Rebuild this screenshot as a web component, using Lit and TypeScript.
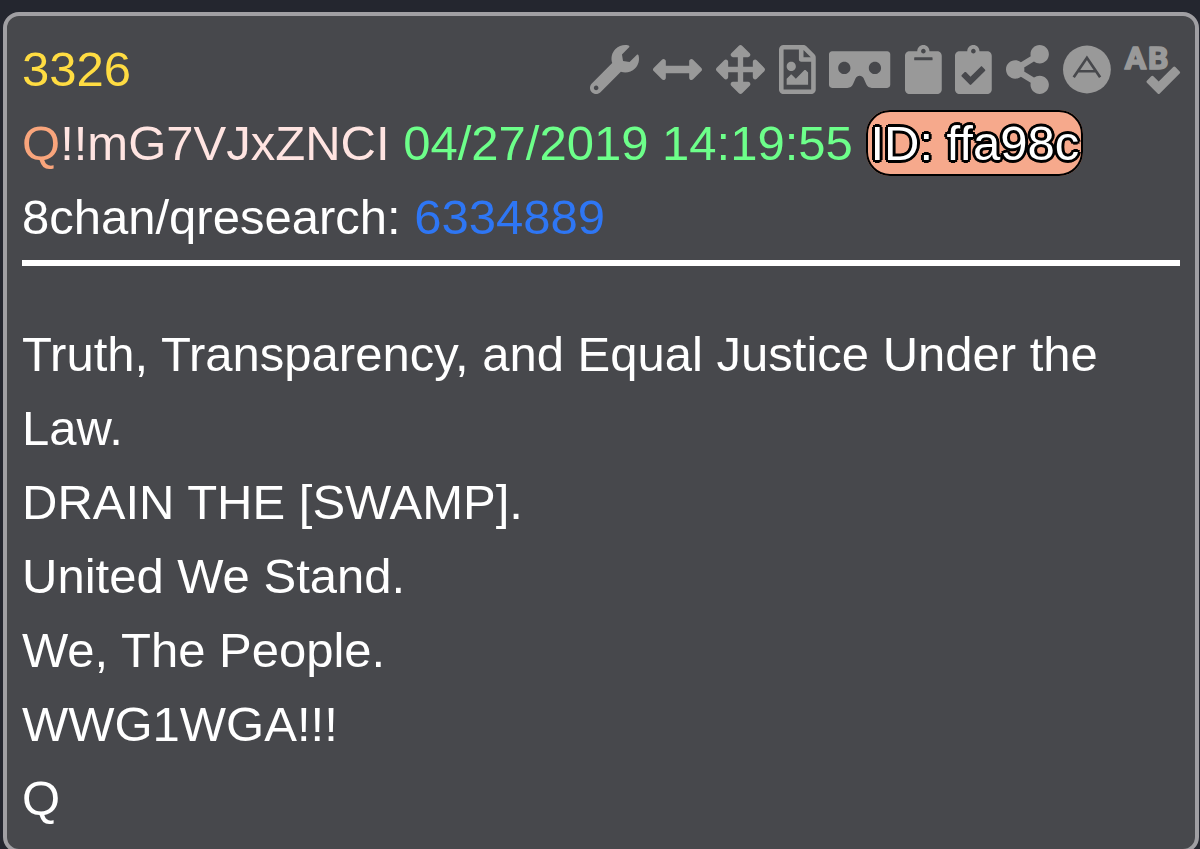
import { LitElement, html, svg, css } from "lit";
import { customElement, property } from "lit/decorators.js";

interface Tool {
  label: string;
  width: number;
  shape: unknown;
}

const TOOLS: Tool[] = [
  {
    label: "Tools",
    width: 512,
    shape: svg`<path d="M507.73 109.1c-2.24-9.03-13.54-12.09-20.12-5.51l-74.36 74.36-67.88-11.31-11.31-67.88 74.36-74.36c6.62-6.62 3.43-17.9-5.66-20.16-47.38-11.74-99.55.91-136.58 37.93-39.64 39.64-50.55 97.1-34.05 147.2L18.74 402.76c-24.99 24.99-24.99 65.51 0 90.5 24.99 24.99 65.51 24.99 90.5 0l213.21-213.21c50.12 16.71 107.47 5.68 147.37-34.22 37.07-37.07 49.7-89.32 37.91-136.73zM64 472c-13.25 0-24-10.75-24-24 0-13.26 10.75-24 24-24s24 10.74 24 24c0 13.25-10.75 24-24 24z"/>`,
  },
  {
    label: "Widen",
    width: 512,
    shape: svg`<path d="M377.941 169.941V216H134.059v-46.059c0-21.382-25.851-32.09-40.971-16.971L7.029 239.029c-9.373 9.373-9.373 24.568 0 33.941l86.059 86.059c15.119 15.119 40.971 4.411 40.971-16.971V296h243.882v46.059c0 21.382 25.851 32.09 40.971 16.971l86.059-86.059c9.373-9.373 9.373-24.568 0-33.941l-86.059-86.059c-15.119-15.12-40.971-4.412-40.971 16.97z"/>`,
  },
  {
    label: "Expand",
    width: 512,
    shape: svg`<path d="M352.201 425.775l-79.196 79.196c-9.373 9.373-24.568 9.373-33.941 0l-79.196-79.196c-15.119-15.119-4.411-40.971 16.971-40.97h51.162L228 284H127.196v51.162c0 21.382-25.851 32.09-40.971 16.971L7.029 272.937c-9.373-9.373-9.373-24.569 0-33.941L86.225 159.8c15.119-15.119 40.971-4.411 40.971 16.971V228H228V127.196h-51.23c-21.382 0-32.09-25.851-16.971-40.971l79.196-79.196c9.373-9.373 24.568-9.373 33.941 0l79.196 79.196c15.119 15.119 4.411 40.971-16.971 40.971h-51.162V228h100.804v-51.162c0-21.382 25.851-32.09 40.97-16.971l79.196 79.196c9.373 9.373 9.373 24.569 0 33.941L425.773 352.2c-15.119 15.119-40.971 4.411-40.97-16.971V284H284v100.804h51.23c21.382 0 32.09 25.851 16.971 40.971z"/>`,
  },
  {
    label: "Save as image",
    width: 384,
    shape: svg`<path d="M369.9 97.9L286 14C277 5 264.8-.1 252.1-.1H48C21.5 0 0 21.5 0 48v416c0 26.5 21.5 48 48 48h288c26.5 0 48-21.5 48-48V131.9c0-12.7-5.1-25-14.1-34zM332.1 128H256V51.9l76.1 76.1zM48 464V48h160v104c0 13.3 10.7 24 24 24h104v288H48zm32-48h224V288l-23.5-23.5c-4.7-4.7-12.3-4.7-17 0L176 352l-39.5-39.5c-4.7-4.7-12.3-4.7-17 0L80 352v64zm48-240c-26.5 0-48 21.5-48 48s21.5 48 48 48 48-21.5 48-48-21.5-48-48-48z"/>`,
  },
  {
    label: "Viewer",
    width: 640,
    shape: svg`<path d="M608 64H32C14.33 64 0 78.33 0 96v320c0 17.67 14.33 32 32 32h160.22c25.19 0 48.03-14.77 58.36-37.74l27.74-61.64C286.21 331.08 302.35 320 320 320s33.79 11.08 41.68 28.62l27.74 61.64C399.75 433.23 422.6 448 447.78 448H608c17.67 0 32-14.33 32-32V96c0-17.67-14.33-32-32-32zM160 304c-35.35 0-64-28.65-64-64s28.65-64 64-64 64 28.65 64 64-28.65 64-64 64zm320 0c-35.35 0-64-28.65-64-64s28.65-64 64-64 64 28.65 64 64-28.65 64-64 64z"/>`,
  },
  {
    label: "Copy",
    width: 384,
    shape: svg`<path d="M384 112v352c0 26.51-21.49 48-48 48H48c-26.51 0-48-21.49-48-48V112c0-26.51 21.49-48 48-48h80c0-35.29 28.71-64 64-64s64 28.71 64 64h80c26.51 0 48 21.49 48 48zM192 40c-13.255 0-24 10.745-24 24s10.745 24 24 24 24-10.745 24-24-10.745-24-24-24m96 114v-20a6 6 0 0 0-6-6H102a6 6 0 0 0-6 6v20a6 6 0 0 0 6 6h180a6 6 0 0 0 6-6z"/>`,
  },
  {
    label: "Copy checked",
    width: 384,
    shape: svg`<path d="M336 64h-80c0-35.3-28.7-64-64-64s-64 28.7-64 64H48C21.5 64 0 85.5 0 112v352c0 26.5 21.5 48 48 48h288c26.5 0 48-21.5 48-48V112c0-26.5-21.5-48-48-48zM192 40c13.3 0 24 10.7 24 24s-10.7 24-24 24-24-10.7-24-24 10.7-24 24-24zm121.2 231.8l-143 141.8c-4.7 4.7-12.3 4.6-17-.1l-82.6-83.3c-4.7-4.7-4.6-12.3.1-17L99.1 285c4.7-4.7 12.3-4.6 17 .1l46 46.4 106-105.2c4.7-4.7 12.3-4.6 17 .1l28.2 28.4c4.7 4.8 4.6 12.3-.1 17z"/>`,
  },
  {
    label: "Share",
    width: 448,
    shape: svg`<path d="M352 320c-22.608 0-43.387 7.819-59.79 20.895l-102.486-64.054a96.551 96.551 0 0 0 0-41.683l102.486-64.054C308.613 184.181 329.392 192 352 192c53.019 0 96-42.981 96-96S405.019 0 352 0s-96 42.981-96 96c0 7.158.79 14.13 2.276 20.841L155.79 180.895C139.387 167.819 118.608 160 96 160c-53.019 0-96 42.981-96 96s42.981 96 96 96c22.608 0 43.387-7.819 59.79-20.895l102.486 64.054A96.301 96.301 0 0 0 256 416c0 53.019 42.981 96 96 96s96-42.981 96-96-42.981-96-96-96z"/>`,
  },
  {
    label: "Archive",
    width: 500,
    shape: svg`<circle cx="250" cy="256" r="250"/><path class="cut" d="M112 338L250 134L388 338M164 274H336"/>`,
  },
  {
    label: "Check spelling",
    width: 576,
    shape: svg`<text class="letters" x="-4" y="247">A</text><text class="letters" x="240" y="247">B</text><path d="M571.37 276.48l-45.21-45.3a15.88 15.88 0 0 0-22.59 0l-151.5 151.5-55.41-55.5a15.88 15.88 0 0 0-22.59 0l-45.3 45.3a16 16 0 0 0 0 22.59l112 112.21a15.89 15.89 0 0 0 22.6 0l208-208.21a16 16 0 0 0-.02-22.59z"/>`,
  },
];

@customElement("tool-bar")
class ToolBar extends LitElement {
  static styles = css`
    :host {
      display: flex;
      align-items: center;
      gap: 14px;
    }
    .tool {
      display: block;
      margin: 0;
      padding: 0;
      border: 0;
      background: none;
      color: #999999;
      cursor: pointer;
    }
    .icon {
      display: block;
      height: 49px;
      width: auto;
      fill: currentColor;
      overflow: visible;
    }
    .cut {
      fill: none;
      stroke: #47484c;
      stroke-width: 28;
    }
    .letters {
      font: bold 334px Roboto, "Liberation Sans", sans-serif;
      stroke: currentColor;
      stroke-width: 18;
      stroke-linejoin: round;
    }
  `;

  render() {
    return TOOLS.map(
      (t) => html`<button class="tool" type="button" aria-label=${t.label}>
        <svg class="icon" viewBox="0 0 ${t.width} 512" aria-hidden="true">${t.shape}</svg>
      </button>`
    );
  }
}

@customElement("app-root")
class AppRoot extends LitElement {
  @property({ attribute: false }) lines = [
    "Truth, Transparency, and Equal Justice Under the Law.",
    "DRAIN THE [SWAMP].",
    "United We Stand.",
    "We, The People.",
    "WWG1WGA!!!",
    "Q",
  ];

  static styles = css`
    :host {
      display: block;
      box-sizing: border-box;
      height: 100vh;
      overflow: hidden;
      padding: 12px 1px 0 3px;
      background: #24262f;
      color: #ffffff;
      font: 49px/74px "Liberation Sans", Arial, sans-serif;
    }
    .post {
      padding: 16px 15px 14px;
      border: 4px solid #a09fa3;
      border-radius: 16px;
      background: #47484c;
    }
    .head {
      padding-bottom: 6px;
      border-bottom: 6px solid #ffffff;
    }
    .top {
      display: flex;
      align-items: center;
      justify-content: space-between;
    }
    .number {
      color: #ffdc42;
      text-decoration: none;
    }
    .name {
      color: #f9a57c;
    }
    .trip {
      color: #ffe4e1;
    }
    .time {
      color: #6dff8a;
    }
    .id {
      padding: 4px 2px;
      border: 2px solid #000000;
      border-radius: 24px;
      background: #f6a98c;
      text-shadow: 2px 0 #000, -2px 0 #000, 0 2px #000, 0 -2px #000,
        2px 2px #000, -2px 2px #000, 2px -2px #000, -2px -2px #000,
        3px 0 #000, -3px 0 #000, 0 3px #000, 0 -3px #000;
    }
    .ref {
      color: #2e76f4;
      text-decoration: none;
    }
    .body {
      padding-top: 51px;
    }
    .line {
      margin: 0;
    }
  `;

  render() {
    return html`<article class="post">
      <header class="head">
        <div class="top">
          <a class="number" href="#3326">3326</a>
          <tool-bar></tool-bar>
        </div>
        <div>
          <span class="name">Q</span><span class="trip">!!mG7VJxZNCI</span>
          <time class="time" datetime="2019-04-27T14:19:55">04/27/2019 14:19:55</time>
          <span class="id">ID: ffa98c</span>
        </div>
        <div>8chan/qresearch: <a class="ref" href="#6334889">6334889</a></div>
      </header>
      <div class="body">${this.lines.map((l) => html`<p class="line">${l}</p>`)}</div>
    </article>`;
  }
}
